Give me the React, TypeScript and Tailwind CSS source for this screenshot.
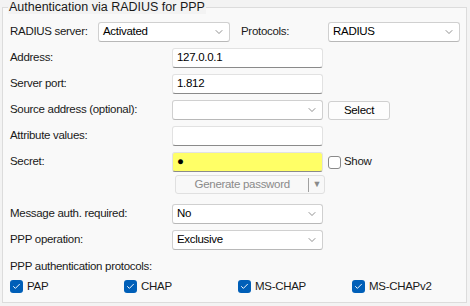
import { Check, ChevronDown } from 'lucide-react';

const label = 'text-[11.5px] tracking-[-0.3px] text-[#1a1a1a]';

function Select({ value, className }: { value: string; className: string }) {
    return (
        <div
            className={`flex h-[20px] items-center justify-between rounded-[3px] border border-[#d0d0d0] border-b-[#b8b8b8] bg-white pl-[4px] pr-[4px] text-[11.5px] tracking-[-0.3px] text-black ${className}`}
        >
            <span>{value}</span>
            <ChevronDown size={12} strokeWidth={1.3} className="text-[#555]" />
        </div>
    );
}

function Input({ value, yellow }: { value: string; yellow?: boolean }) {
    return (
        <div
            className={`flex h-[20px] w-[151px] items-center rounded-[3px] border border-[#e2e2e2] border-b-[#8a8a8a] px-[4px] text-[11.5px] tracking-[-0.3px] text-black ${
                yellow ? 'bg-[#ffff66]' : 'bg-white'
            }`}
        >
            {value}
        </div>
    );
}

function Row({ title, children }: { title: string; children?: React.ReactNode }) {
    return (
        <div className="flex h-[26px] items-center">
            <span className={`${label} w-[162px]`}>{title}</span>
            {children}
        </div>
    );
}

function Box({ text }: { text: string }) {
    return (
        <div className="flex w-[114px] items-center gap-[4px]">
            <span className="flex h-[13px] w-[13px] items-center justify-center rounded-[3px] bg-[#005fb8]">
                <Check size={9} strokeWidth={2.5} className="text-white" />
            </span>
            <span className={label}>{text}</span>
        </div>
    );
}

export default function App() {
    return (
        <div className="h-[306px] w-[470px] bg-[#f3f3f3] font-['Liberation_Sans',Arial,sans-serif]">
            <div className="relative ml-[2px] mr-[3px] pt-[7px]">
                <span className="absolute left-[6px] top-0 bg-[#f3f3f3] px-[1px] text-[12.5px] leading-[14px] text-[#1a1a1a]">
                    Authentication via RADIUS for PPP
                </span>
                <div className="h-[296px] border border-[#dcdcdc] bg-[#f9f9f9] pl-[7px] pt-[14px]">
                    <div className="flex h-[20px] items-center">
                        <span className={`${label} w-[88px]`}>RADIUS server:</span>
                        <Select value="Activated" className="w-[132px]" />
                        <span className={`${label} ml-[11px] w-[87px]`}>Protocols:</span>
                        <Select value="RADIUS" className="w-[132px]" />
                    </div>
                    <div className="mt-[3px]">
                        <Row title="Address:">
                            <Input value="127.0.0.1" />
                        </Row>
                        <Row title="Server port:">
                            <Input value="1.812" />
                        </Row>
                        <Row title="Source address (optional):">
                            <Select value="" className="w-[151px] border-[#8a8a8a]" />
                            <button className="ml-[5px] h-[19px] w-[62px] rounded-[3px] border border-[#d0d0d0] bg-[#fdfdfd] text-[11.5px] tracking-[-0.3px] text-black">
                                Select
                            </button>
                        </Row>
                        <Row title="Attribute values:">
                            <Input value="" />
                        </Row>
                        <Row title="Secret:">
                            <Input value="●" yellow />
                            <span className="ml-[5px] h-[13px] w-[13px] rounded-[3px] border border-[#8a8a8a] bg-white" />
                            <span className={`${label} ml-[3px]`}>Show</span>
                        </Row>
                        <div className="flex h-[26px] items-start pl-[165px]">
                            <div className="flex h-[19px] w-[150px] items-center rounded-[3px] border border-[#e0e0e0] bg-[#f8f8f8] text-[11.5px] tracking-[-0.3px] text-[#8a8a8a]">
                                <span className="flex-1 text-center">Generate password</span>
                                <span className="h-[14px] w-px bg-[#a0a0a0]" />
                                <span className="px-[3px] text-[9px] text-[#8a8a8a]">▼</span>
                            </div>
                        </div>
                        <Row title="Message auth. required:">
                            <Select value="No" className="w-[151px]" />
                        </Row>
                        <Row title="PPP operation:">
                            <Select value="Exclusive" className="w-[151px]" />
                        </Row>
                        <div className={`${label} mt-[5px] h-[20px]`}>PPP authentication protocols:</div>
                        <div className="flex">
                            <Box text="PAP" />
                            <Box text="CHAP" />
                            <Box text="MS-CHAP" />
                            <Box text="MS-CHAPv2" />
                        </div>
                    </div>
                </div>
            </div>
        </div>
    );
}
